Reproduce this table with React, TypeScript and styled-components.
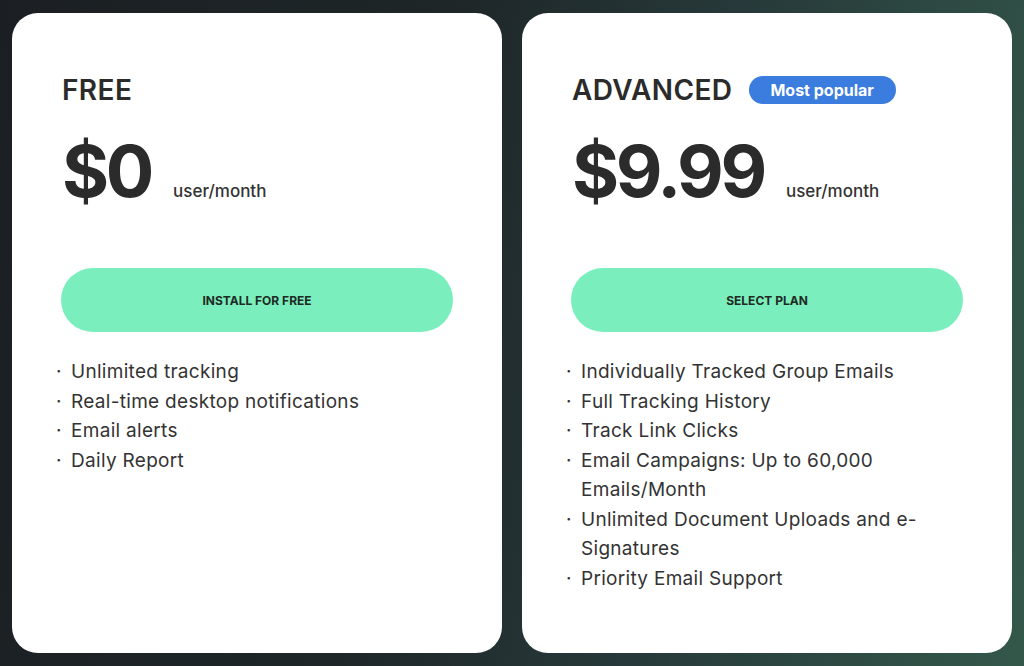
import React from "react";
import styled, { createGlobalStyle } from "styled-components";

const Global = createGlobalStyle`
  html, body { margin: 0; padding: 0; }
  body {
    font-family: Inter, "Noto Sans", Arial, sans-serif;
    background: #1b1f23;
    min-height: 666px;
  }
`;

const Page = styled.div`
  display: grid;
  grid-template-columns: 490px 490px;
  gap: 20px;
  padding: 13px 12px;
  height: 666px;
  box-sizing: border-box;
  background: linear-gradient(100deg, #1b1f23 0%, #1e2628 40%, #27393a 65%, #33584a 100%);
`;

const Card = styled.div`
  background: #fff;
  border-radius: 26px;
  padding: 59px 49px 0 49px;
  box-sizing: border-box;
  color: #2f2f2f;
`;

const TitleRow = styled.div`
  display: flex;
  align-items: center;
  gap: 17px;
  padding-left: 1px;
  height: 36px;
`;

const Title = styled.h2`
  margin: 0;
  font-size: 28px;
  font-weight: 600;
  letter-spacing: 0.4px;
  color: #2b2b2b;
`;

const Badge = styled.span`
  display: inline-flex;
  align-items: center;
  height: 28px;
  padding: 0 22px 0 21px;
  border-radius: 14px;
  background: #3a7ddf;
  color: #fff;
  font-size: 16px;
  font-weight: 700;
`;

const PriceRow = styled.div`
  display: flex;
  align-items: baseline;
  gap: 22px;
  margin-top: 23px;
  padding-left: 1px;
`;

const Price = styled.span`
  font-size: 72px;
  font-weight: 700;
  line-height: 80px;
  letter-spacing: -3.3px;
  color: #2b2b2b;
`;

const Unit = styled.span`
  font-size: 17px;
  font-weight: 500;
  color: #333;
`;

const CTA = styled.button`
  display: flex;
  align-items: center;
  justify-content: center;
  width: 100%;
  height: 64px;
  margin-top: 57px;
  border: none;
  border-radius: 32px;
  background: #7aefbd;
  color: #1f2a24;
  font-family: inherit;
  font-size: 12px;
  font-weight: 700;
  letter-spacing: 0;
`;

const Features = styled.ul`
  list-style: none;
  margin: 25px 0 0 0;
  padding: 0 0 0 10px;
  font-size: 19px;
  line-height: 29.5px;
  letter-spacing: 0.3px;
  color: #333;
`;

const Feature = styled.li`
  position: relative;
  &::before {
    content: "·";
    position: absolute;
    left: -15px;
    top: 0;
  }
`;

type Plan = {
  name: string;
  badge?: string;
  price: string;
  cta: string;
  features: string[];
};

const plans: Plan[] = [
  {
    name: "FREE",
    price: "$0",
    cta: "INSTALL FOR FREE",
    features: [
      "Unlimited tracking",
      "Real-time desktop notifications",
      "Email alerts",
      "Daily Report",
    ],
  },
  {
    name: "ADVANCED",
    badge: "Most popular",
    price: "$9.99",
    cta: "SELECT PLAN",
    features: [
      "Individually Tracked Group Emails",
      "Full Tracking History",
      "Track Link Clicks",
      "Email Campaigns: Up to 60,000 Emails/Month",
      "Unlimited Document Uploads and e-Signatures",
      "Priority Email Support",
    ],
  },
];

export default function App() {
  return (
    <>
      <Global />
      <Page>
        {plans.map((p) => (
          <Card key={p.name}>
            <TitleRow>
              <Title>{p.name}</Title>
              {p.badge && <Badge>{p.badge}</Badge>}
            </TitleRow>
            <PriceRow>
              <Price>{p.price}</Price>
              <Unit>user/month</Unit>
            </PriceRow>
            <CTA>{p.cta}</CTA>
            <Features>
              {p.features.map((f) => (
                <Feature key={f}>{f}</Feature>
              ))}
            </Features>
          </Card>
        ))}
      </Page>
    </>
  );
}
